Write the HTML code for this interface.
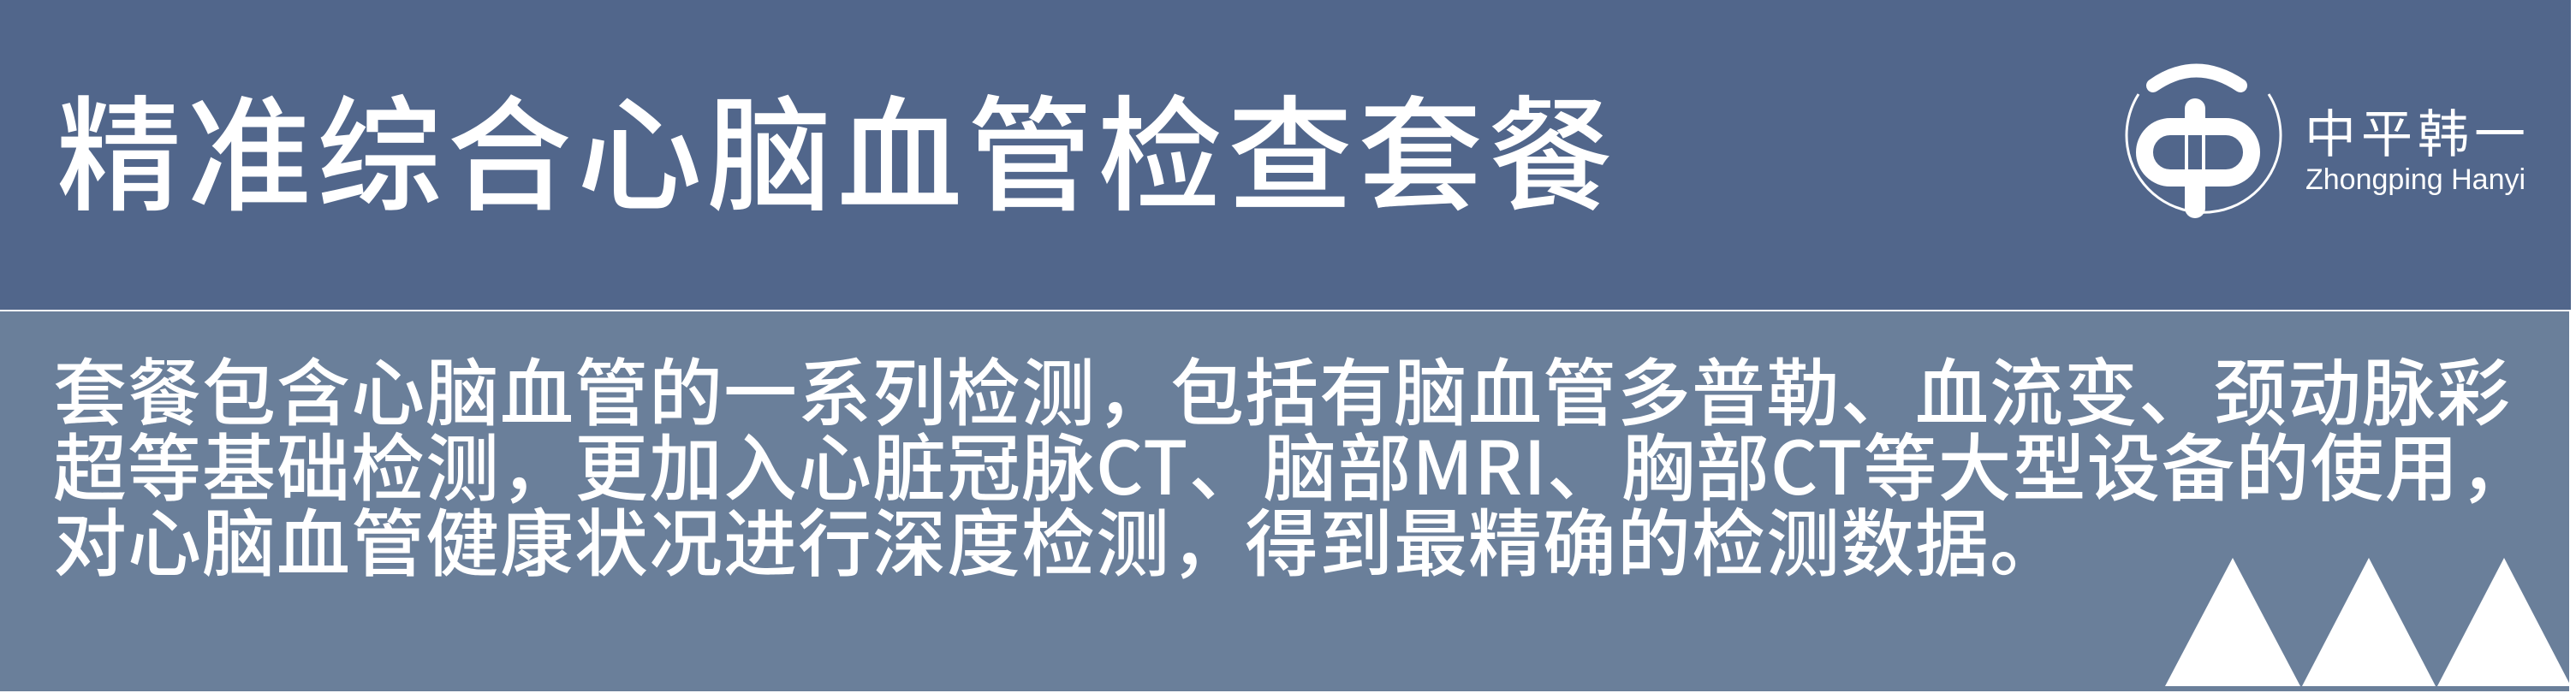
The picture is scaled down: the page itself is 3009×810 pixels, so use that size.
<!DOCTYPE html>
<html><head><meta charset="utf-8"><style>
html,body{margin:0;padding:0;}
body{width:3009px;height:810px;background:#fff;position:relative;overflow:hidden;font-family:"Liberation Sans","Noto Sans CJK SC",sans-serif;}
.top{position:absolute;left:0;top:0;width:3003px;height:362px;background:#51668b;}
.bot{position:absolute;left:0;top:364px;width:3001px;height:444px;background:#6a7f9a;}
.title{position:absolute;left:66px;top:82px;font-size:146px;line-height:180px;color:#fff;font-weight:500;letter-spacing:6px;white-space:nowrap;font-family:"Noto Sans CJK SC",sans-serif;}
.body{position:absolute;left:62px;top:409px;font-size:86px;line-height:88px;color:#fff;font-weight:500;white-space:nowrap;font-family:"Noto Sans CJK SC",sans-serif;letter-spacing:1px;}
.cn{position:absolute;left:2692px;top:118px;font-size:60px;line-height:70px;color:#fff;font-family:"Noto Sans CJK SC",sans-serif;letter-spacing:6px;}
.en{position:absolute;left:2693px;top:190px;font-size:34px;line-height:40px;color:#fff;}
</style></head><body>
<div class="top"></div>
<div class="bot"></div>
<div class="title">精准综合心脑血管检查套餐</div>
<div class="body">套餐包含心脑血管的一系列检测，包括有脑血管多普勒、血流变、颈动脉彩<br>超等基础检测，更加入心脏冠脉CT、脑部MRI、胸部CT等大型设备的使用，<br>对心脑血管健康状况进行深度检测，得到最精确的检测数据。</div>
<svg style="position:absolute;left:2460px;top:60px" width="220" height="220" viewBox="0 0 220 220">
  <path d="M38 50 A90 90 0 1 0 190 50" fill="none" stroke="#fff" stroke-width="3"/>
  <path d="M55 40 Q105 5 157 40" fill="none" stroke="#fff" stroke-width="16" stroke-linecap="round"/>
  <rect x="92" y="55" width="24" height="140" rx="12" fill="#fff"/>
  <path d="M75 88 H140 A30 30 0 0 1 140 148 H75 A30 30 0 0 1 75 88 Z" fill="none" stroke="#fff" stroke-width="20"/>
  <rect x="96" y="98" width="16" height="40" fill="#51668b"/>
  <rect x="92" y="96" width="24" height="2" fill="#fff"/>
</svg>
<div class="cn">中平韩一</div>
<div class="en">Zhongping Hanyi</div>
<svg style="position:absolute;left:0;top:0" width="3009" height="810">
  <polygon points="2529,802 2608,652 2687,802" fill="#fff"/>
  <polygon points="2689,802 2767,652 2845,802" fill="#fff"/>
  <polygon points="2847,802 2925,652 3003,802" fill="#fff"/>
</svg>
</body></html>
